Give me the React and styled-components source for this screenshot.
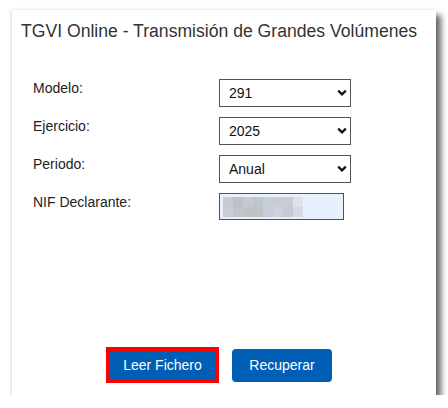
import styled, { createGlobalStyle } from "styled-components";

const GlobalStyle = createGlobalStyle`
  html, body {
    margin: 0;
    padding: 0;
    background: #fff;
  }
  body {
    font-family: "Liberation Sans", Arial, sans-serif;
  }
`;

const Card = styled.div`
  margin: 10px 0 0 12px;
  width: 424px;
  height: 385px;
  box-sizing: border-box;
  background: #fff;
  box-shadow: 5px 5px 6px rgba(0, 0, 0, 0.6), -1px 0 3px rgba(0, 0, 0, 0.12);
  display: flex;
  flex-direction: column;
  padding: 11px 0 12px 9px;
`;

const Title = styled.h1`
  margin: 0;
  font-size: 17.6px;
  font-weight: normal;
  line-height: 21px;
  color: #333;
`;

const Form = styled.div`
  display: grid;
  grid-template-columns: 186px auto;
  row-gap: 10px;
  margin: 37px 0 0 12px;
  align-items: start;
`;

const Label = styled.label`
  font-size: 14px;
  line-height: 16px;
  color: #222;
  padding-top: 1px;
`;

const SelectWrap = styled.div`
  position: relative;
  width: 132px;
  height: 28px;
`;

const Select = styled.select`
  appearance: none;
  width: 100%;
  height: 100%;
  box-sizing: border-box;
  border: 1px solid #4f535c;
  border-radius: 0;
  background: #fff;
  font-family: "Liberation Sans", Arial, sans-serif;
  font-size: 14px;
  color: #111;
  padding: 0 0 0 9px;
  margin: 0;
  outline: none;
`;

const Chevron = styled.svg`
  position: absolute;
  right: 4px;
  top: 10px;
  pointer-events: none;
`;

const Input = styled.div`
  position: relative;
  width: 125px;
  height: 27px;
  box-sizing: border-box;
  border: 1px solid #4f535c;
  background: #e8f0fe;
  padding: 3px 0 0 3px;
`;

const Mosaic = styled.div`
  display: grid;
  grid-template-columns: repeat(8, 10px);
  grid-auto-rows: 10px;
`;

const Cell = styled.div`
  background: ${(p) => p.$c};
`;

const Actions = styled.div`
  margin-top: auto;
  display: flex;
  align-items: center;
  gap: 13px;
  padding-left: 85px;
`;

const Button = styled.button`
  box-sizing: border-box;
  background: #005eb5;
  color: #fff;
  font-family: "Liberation Sans", Arial, sans-serif;
  font-size: 14px;
  cursor: pointer;
  width: ${(p) => (p.$marked ? "113px" : "100px")};
  height: ${(p) => (p.$marked ? "36px" : "33px")};
  border: ${(p) => (p.$marked ? "4px solid #ff0000" : "none")};
  border-radius: ${(p) => (p.$marked ? "0" : "4px")};
  padding: 0;
`;

const cells = [
  "#c7cbd5", "#bdbfc9", "#c5c9d0", "#c2c4cb", "#c5cfdc", "#c8cad5", "#c9cbd5", "#dde1ec",
  "#c8ccd4", "#c0c5cc", "#bec3c8", "#bdc2c5", "#c8ccd8", "#cdd2d8", "#c6c8d4", "#d5d8e5",
];

const Dropdown = ({ value }) => (
  <SelectWrap>
    <Select defaultValue={value}>
      <option>{value}</option>
    </Select>
    <Chevron width="10" height="8" viewBox="0 0 10 8">
      <path d="M1.2 1.6 L5 5.4 L8.8 1.6" fill="none" stroke="#111" strokeWidth="2.2" />
    </Chevron>
  </SelectWrap>
);

export default function App() {
  return (
    <>
      <GlobalStyle />
      <Card>
        <Title>TGVI Online - Transmisión de Grandes Volúmenes</Title>
        <Form>
          <Label>Modelo:</Label>
          <Dropdown value="291" />
          <Label>Ejercicio:</Label>
          <Dropdown value="2025" />
          <Label>Periodo:</Label>
          <Dropdown value="Anual" />
          <Label>NIF Declarante:</Label>
          <Input>
            <Mosaic>
              {cells.map((c, i) => (
                <Cell key={i} $c={c} />
              ))}
            </Mosaic>
          </Input>
        </Form>
        <Actions>
          <Button $marked>Leer Fichero</Button>
          <Button>Recuperar</Button>
        </Actions>
      </Card>
    </>
  );
}
